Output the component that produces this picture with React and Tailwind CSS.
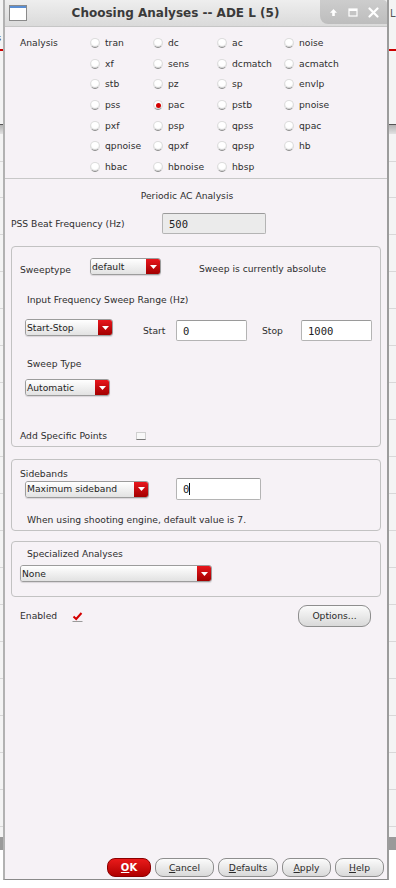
const rows = [
  ['tran', 'dc', 'ac', 'noise'],
  ['xf', 'sens', 'dcmatch', 'acmatch'],
  ['stb', 'pz', 'sp', 'envlp'],
  ['pss', 'pac', 'pstb', 'pnoise'],
  ['pxf', 'psp', 'qpss', 'qpac'],
  ['qpnoise', 'qpxf', 'qpsp', 'hb'],
  ['hbac', 'hbnoise', 'hbsp', null],
]

function Radio({ label, on }) {
  return (
    <span className="flex items-center gap-[5px]">
      <span className="relative w-[10px] h-[10px] rounded-full bg-white border border-[#dcdcdc] border-b-[#8a8a8a] shadow-[inset_0_-1px_1px_rgba(0,0,0,0.18)] flex items-center justify-center">
        {on && <span className="w-[5px] h-[5px] rounded-full bg-[#d40000]" />}
      </span>
      <span>{label}</span>
    </span>
  )
}

function Combo({ label, className }) {
  return (
    <div className={`flex h-[17px] rounded-[3px] border border-[#9c9c9c] overflow-hidden shadow-[0_1px_1px_rgba(0,0,0,0.12)] ${className}`}>
      <div className="flex-1 flex items-center pl-[1px] bg-linear-to-b from-white to-[#e2e2e2] text-[#1e1e1e] whitespace-nowrap">{label}</div>
      <div className="w-[14px] flex items-center justify-center bg-linear-to-b from-[#e8161c] to-[#a30000]">
        <svg width="7" height="4" viewBox="0 0 7 4"><path d="M0 0h7L3.5 4z" fill="#fff" /></svg>
      </div>
    </div>
  )
}

function Field({ value, className, cursor, bg = 'bg-white' }) {
  return (
    <div className={`flex items-center pl-[6px] ${bg} border border-[#b4b4b4] border-t-[#9a9a9a] rounded-[2px] font-['DejaVu_Sans_Mono',monospace] text-[10.5px] text-[#222] ${className}`}>
      {value}
      {cursor && <span className="w-px h-[12px] bg-[#111]" />}
    </div>
  )
}

function Btn({ children, className }) {
  return (
    <div className={`h-[19px] flex items-center justify-center rounded-[8px] border border-[#8e8e8e] bg-linear-to-b from-[#fbfbfb] to-[#d9d9d9] text-[#2a2a2a] ${className}`}>
      {children}
    </div>
  )
}

function Backdrop() {
  const lines = [161, 197, 234, 271, 308, 345, 382, 419, 456, 493, 530, 567, 604, 641, 678, 715, 752, 789, 826]
  return (
    <div className="absolute inset-0">
      <div className="absolute left-0 right-0 top-[49px] h-[2px] bg-[#cc0000]" />
      <div className="absolute left-0 right-0 top-[124px] h-[10px] border-t border-[#555] bg-linear-to-b from-[#b4b4b4] to-[#e2e2e2]" />
      {lines.map((y) => (
        <div key={y} className="absolute left-0 right-0 h-px bg-[#d8d8d8]" style={{ top: y }} />
      ))}
      <div className="absolute left-0 right-0 top-[837px] h-[13px] bg-[#9a9a9a]" />
      <div className="absolute left-0 right-0 top-[850px] h-[38px] bg-white" />
      <span className="absolute left-[-9px] top-[32px] text-[9px] text-[#333]">es</span>
      <span className="absolute left-[390px] top-[8px] text-[10px] text-[#555]">L</span>
    </div>
  )
}

function TitleBar() {
  return (
    <div className="h-[27px] shrink-0 flex items-start bg-linear-to-b from-[#eeeeee] to-[#dadada] border-b border-[#c6c6c6]">
      <div className="mt-[5px] ml-[4px] w-[18px] h-[16px] border border-[#8a8a8a] bg-white flex flex-col">
        <div className="h-[2px] bg-[#5a8ed2]" />
      </div>
      <div className="flex-1 mt-[6px] pl-[4px] text-center text-[12px] leading-[15px] font-bold text-[#3a3a3a]">
        Choosing Analyses -- ADE L (5)
      </div>
      <div className="w-[67px] h-[24px] rounded-bl-[8px] rounded-tr-[4px] bg-linear-to-b from-[#cdcdcd] to-[#bdbdbd] flex items-center pl-[9px] gap-[10px]">
        <svg width="9" height="9" viewBox="0 0 9 9"><path d="M4.5 1 L8 4.8 H5.8 V8 H3.2 V4.8 H1 Z" fill="#fff" /></svg>
        <svg width="10" height="9" viewBox="0 0 10 9"><rect x="1" y="1" width="8" height="7" fill="none" stroke="#fff" strokeWidth="1.2" /><rect x="1" y="1" width="8" height="2" fill="#fff" /></svg>
        <svg width="11" height="11" viewBox="0 0 11 11"><path d="M1.5 1.5 L9.5 9.5 M9.5 1.5 L1.5 9.5" stroke="#fff" strokeWidth="2.2" strokeLinecap="round" /></svg>
      </div>
    </div>
  )
}

function U({ c, rest }) {
  return (
    <span><span className="underline">{c}</span>{rest}</span>
  )
}

export default function App() {
  return (
    <div className="relative w-[396px] h-[888px] overflow-hidden bg-[#f4f4f4] font-['DejaVu_Sans',sans-serif] text-[9.2px] leading-[12px] text-[#2e2e2e]">
      <Backdrop />
      <div className="absolute left-[3px] top-0 w-[386px] h-[880px] flex flex-col bg-[#f6f2f6] border-l-2 border-r-2 border-b border-l-[#b2b2b2] border-r-[#9c9c9c] border-b-[#8a8a8a]">
        <TitleBar />

        {/* Analysis radios */}
        <div className="flex pt-[6px] pl-[15px]">
          <div className="w-[70px] h-[20.6px] flex items-center">Analysis</div>
          <div className="grid grid-cols-[63px_64px_67px_60px]">
            {rows.map((r, i) =>
              r.map((name, j) => (
                <div key={`${i}-${j}`} className="h-[20.6px] flex items-center">
                  {name && <Radio label={name} on={name === 'pac'} />}
                </div>
              ))
            )}
          </div>
        </div>

        <div className="mt-[1px] h-px bg-[#c8c8c8]" />

        <div className="mt-[11px] text-center pr-[18px]">Periodic AC Analysis</div>

        <div className="mt-[11px] flex items-center pl-[6px]">
          <span className="w-[151px]">PSS Beat Frequency (Hz)</span>
          <Field value="500" bg="bg-[#ebebeb]" className="w-[104px] h-[21px]" />
        </div>

        {/* Sweep group */}
        <div className="mt-[12px] mx-[6px] h-[201px] border border-[#c2c2c2] rounded-[4px] pl-[8px] pt-[11px]">
          <div className="flex items-start">
            <span className="w-[70px] mt-[6px]">Sweeptype</span>
            <Combo label="default" className="w-[71px]" />
            <span className="ml-[38px] mt-[5px]">Sweep is currently absolute</span>
          </div>
          <div className="mt-[18px] ml-[7px]">Input Frequency Sweep Range (Hz)</div>
          <div className="mt-[13px] flex items-start">
            <Combo label="Start-Stop" className="ml-[5px] w-[88px]" />
            <span className="ml-[30px] mt-[6px] w-[33px]">Start</span>
            <Field value="0" className="mt-[1px] w-[71px] h-[21px]" />
            <span className="ml-[15px] mt-[6px] w-[39px]">Stop</span>
            <Field value="1000" className="mt-[1px] w-[71px] h-[21px]" />
          </div>
          <div className="mt-[17px] ml-[7px]">Sweep Type</div>
          <Combo label="Automatic" className="mt-[9px] ml-[5px] w-[85px]" />
          <div className="mt-[34px] flex items-center">
            <span className="w-[116px]">Add Specific Points</span>
            <span className="w-[10px] h-[8px] border border-[#d0d0d0] border-b-[#7a7a7a] bg-[#f8f8f8]" />
          </div>
        </div>

        {/* Sidebands */}
        <div className="mt-[12px] mx-[6px] h-[72px] border border-[#c2c2c2] rounded-[4px] pl-[8px] pt-[8px]">
          <div>Sidebands</div>
          <div className="-mt-[2px] h-[22px] flex items-center">
            <Combo label="Maximum sideband" className="ml-[5px] w-[124px]" />
            <Field value="0" cursor className="ml-[27px] w-[85px] h-[22px]" />
          </div>
          <div className="mt-[14px] ml-[7px]">When using shooting engine, default value is 7.</div>
        </div>

        {/* Specialized */}
        <div className="mt-[10px] mx-[6px] h-[56px] border border-[#c2c2c2] rounded-[4px] pl-[8px] pt-[6px]">
          <div className="ml-[7px]">Specialized Analyses</div>
          <Combo label="None" className="mt-[5px] w-[192px]" />
        </div>

        <div className="mt-[8px] flex items-center pl-[15px] pr-[16px]">
          <span className="w-[52px]">Enabled</span>
          <svg width="11" height="11" viewBox="0 0 11 11">
            <path d="M1.5 5.5 L4.2 8 L9.5 2" fill="none" stroke="#d40000" strokeWidth="2" />
            <path d="M0.5 10.5 H10.5" stroke="#9a9a9a" strokeWidth="1" />
          </svg>
          <div className="flex-1" />
          <Btn className="w-[73px] h-[22px] rounded-[9px]">Options...</Btn>
        </div>

        <div className="flex-1" />

        <div className="flex justify-end gap-[4px] pr-[3px] pb-[2px]">
          <div className="w-[44px] h-[19px] flex items-center justify-center rounded-[8px] border border-[#8a0000] bg-linear-to-b from-[#ea1a1a] to-[#b00000] text-white font-bold text-[10px]">
            <U c="O" rest="K" />
          </div>
          <Btn className="w-[59px]"><U c="C" rest="ancel" /></Btn>
          <Btn className="w-[60px]"><U c="D" rest="efaults" /></Btn>
          <Btn className="w-[49px]"><U c="A" rest="pply" /></Btn>
          <Btn className="w-[49px]"><U c="H" rest="elp" /></Btn>
        </div>
      </div>
    </div>
  )
}
